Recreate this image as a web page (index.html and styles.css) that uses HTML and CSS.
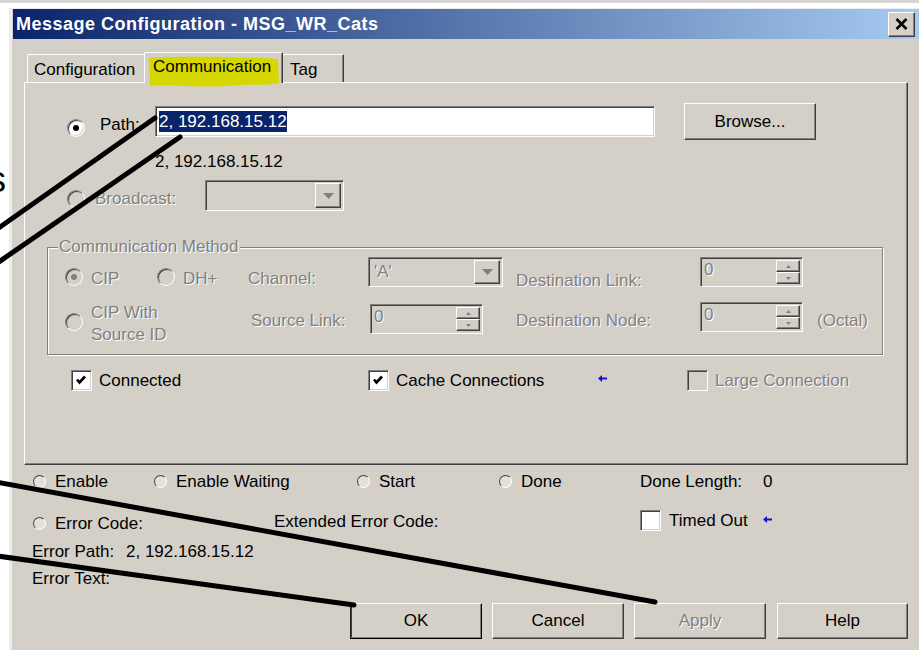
FILE: index.html
```html
<!DOCTYPE html>
<html lang="en">
<head>
<meta charset="utf-8">
<title>Message Configuration - MSG_WR_Cats</title>
<link rel="stylesheet" href="styles.css">
</head>
<body>
<div class="screen">
  <div class="desk-strip"></div>
  <span class="behind-letter">s</span>

  <div class="dialog">
    <div class="titlebar">
      <span class="title">Message Configuration - MSG_WR_Cats</span>
      <div class="close-btn">
        <svg width="13" height="12" viewBox="0 0 13 12"><path d="M1.5 1 L11.5 11 M11.5 1 L1.5 11" stroke="#000" stroke-width="2.6" fill="none"/></svg>
      </div>
    </div>

    <div class="tabs">
      <div class="tab tab-first">Configuration</div>
      <div class="tab tab-active">
        <svg class="marker" width="134" height="33" viewBox="0 0 134 33"><path d="M2 2.5 C 40 1, 95 1.5, 131 4 L132 28 C 118 31, 100 29, 78 31 C 55 33, 30 29, 3 30.5 Z" fill="#d7d700"/></svg>
        <span class="tab-text">Communication</span>
      </div>
      <div class="tab tab-last">Tag</div>
    </div>

    <div class="panel">
      <div class="row row-path">
        <span class="radio radio-on"></span>
        <span class="lbl-path">Path:</span>
        <div class="field path-field"><span class="sel">2, 192.168.15.12</span></div>
        <div class="btn btn-browse">Browse...</div>
      </div>

      <div class="row row-ip">2, 192.168.15.12</div>

      <div class="row row-bcast">
        <span class="radio radio-dis"></span>
        <span class="lbl-bcast dis">Broadcast:</span>
        <div class="field field-dis combo combo-bcast">
          <span class="combo-text"></span>
          <span class="combo-btn"><svg width="11" height="6" viewBox="0 0 11 6"><path d="M0 0 H11 L5.5 6 Z" fill="#808080"/></svg></span>
        </div>
      </div>

      <div class="group">
        <div class="group-title dis">Communication Method</div>
        <div class="grow grow-1">
          <span class="radio radio-dis radio-on g-radio"></span>
          <span class="g-cip dis">CIP</span>
          <span class="radio radio-dis g-radio g-radio-dh"></span>
          <span class="g-dh dis">DH+</span>
          <span class="g-channel dis">Channel:</span>
          <div class="field field-dis combo combo-channel">
            <span class="combo-text dis">'A'</span>
            <span class="combo-btn"><svg width="11" height="6" viewBox="0 0 11 6"><path d="M0 0 H11 L5.5 6 Z" fill="#808080"/></svg></span>
          </div>
          <span class="g-dlink dis">Destination Link:</span>
          <div class="field field-dis spin spin-dlink">
            <span class="spin-val dis">0</span>
            <span class="spin-btns">
              <span class="spin-b"><svg width="5" height="3" viewBox="0 0 5 3"><path d="M0 3 H5 L2.5 0 Z" fill="#808080"/></svg></span>
              <span class="spin-b"><svg width="5" height="3" viewBox="0 0 5 3"><path d="M0 0 H5 L2.5 3 Z" fill="#808080"/></svg></span>
            </span>
          </div>
        </div>
        <div class="grow grow-2">
          <span class="radio radio-dis g-radio-2"></span>
          <span class="g-cipsrc dis">CIP With<br>Source ID</span>
          <span class="g-slink dis">Source Link:</span>
          <div class="field field-dis spin spin-slink">
            <span class="spin-val dis">0</span>
            <span class="spin-btns">
              <span class="spin-b"><svg width="5" height="3" viewBox="0 0 5 3"><path d="M0 3 H5 L2.5 0 Z" fill="#808080"/></svg></span>
              <span class="spin-b"><svg width="5" height="3" viewBox="0 0 5 3"><path d="M0 0 H5 L2.5 3 Z" fill="#808080"/></svg></span>
            </span>
          </div>
          <span class="g-dnode dis">Destination Node:</span>
          <div class="field field-dis spin spin-dnode">
            <span class="spin-val dis">0</span>
            <span class="spin-btns">
              <span class="spin-b"><svg width="5" height="3" viewBox="0 0 5 3"><path d="M0 3 H5 L2.5 0 Z" fill="#808080"/></svg></span>
              <span class="spin-b"><svg width="5" height="3" viewBox="0 0 5 3"><path d="M0 0 H5 L2.5 3 Z" fill="#808080"/></svg></span>
            </span>
          </div>
          <span class="g-octal dis">(Octal)</span>
        </div>
      </div>

      <div class="row row-checks">
        <span class="check cb-connected"><svg width="19" height="19" viewBox="0 0 19 19"><path d="M5 8.5 L7.5 11.5 L13 5.5" stroke="#000" stroke-width="2.6" fill="none"/></svg></span>
        <span class="ck-label ck-connected">Connected</span>
        <span class="check"><svg width="19" height="19" viewBox="0 0 19 19"><path d="M5 8.5 L7.5 11.5 L13 5.5" stroke="#000" stroke-width="2.6" fill="none"/></svg></span>
        <span class="ck-label ck-cache">Cache Connections</span>
        <svg class="arrow arrow-cache" width="9" height="7" viewBox="0 0 9 7"><path d="M0 3.5 L4 0 V2.5 H9 V4.5 H4 V7 Z" fill="#1414c8"/></svg>
        <span class="check check-dis cb-large"></span>
        <span class="ck-label dis">Large Connection</span>
      </div>
    </div>

    <div class="status-row status-a">
      <span class="cell cell-enable"><span class="led"></span>Enable</span>
      <span class="cell cell-waiting"><span class="led"></span>Enable Waiting</span>
      <span class="cell cell-start"><span class="led"></span>Start</span>
      <span class="cell cell-done"><span class="led"></span>Done</span>
      <span class="cell cell-dlen">Done Length:</span>
      <span>0</span>
    </div>

    <div class="status-row status-b">
      <span class="cell cell-err"><span class="led"></span>Error Code:</span>
      <span class="cell cell-ext">Extended Error Code:</span>
      <span class="check check-timed"></span>
      <span class="cell cell-timed">Timed Out</span>
      <svg class="arrow arrow-timed" width="9" height="7" viewBox="0 0 9 7"><path d="M0 3.5 L4 0 V2.5 H9 V4.5 H4 V7 Z" fill="#1414c8"/></svg>
    </div>

    <div class="status-row status-c">
      <span class="cell cell-epath">Error Path:</span>
      <span>2, 192.168.15.12</span>
    </div>

    <div class="status-row status-d">
      <span class="cell">Error Text:</span>
    </div>

    <div class="buttons">
      <div class="btn btn-default">OK</div>
      <div class="btn">Cancel</div>
      <div class="btn dis">Apply</div>
      <div class="btn btn-help">Help</div>
    </div>
  </div>

  <svg class="ink" width="919" height="650" viewBox="0 0 919 650">
    <g stroke="#000" stroke-width="5" stroke-linecap="round" fill="none">
      <line x1="155" y1="118" x2="-10" y2="234"/>
      <line x1="180" y1="137" x2="-10" y2="268"/>
      <line x1="-10" y1="481" x2="655" y2="602"/>
      <line x1="-10" y1="555" x2="354" y2="605"/>
    </g>
  </svg>
</div>
</body>
</html>
```
FILE: styles.css
```css
html, body {
  margin: 0;
  padding: 0;
  background: #fff;
}

body {
  font-family: "Liberation Sans", Arial, sans-serif;
  font-size: 17px;
  line-height: 20px;
  color: #000;
}

.screen {
  position: relative;
  width: 919px;
  height: 650px;
  overflow: hidden;
}

.desk-strip {
  height: 3px;
  background: #d6d6d6;
  margin-bottom: 5px;
}

.behind-letter {
  position: absolute;
  left: -12px;
  top: 162px;
  font-size: 36px;
  line-height: 36px;
}

/* dialog frame */
.dialog {
  margin-left: 9px;
  border-left: 3px solid #ececec;
  border-top: 1px solid #ececec;
  padding-left: 1px;
  background: #d4d0c8;
  height: 642px;
}

.titlebar {
  display: flex;
  align-items: center;
  height: 30px;
  padding: 0 4px 0 3px;
  background: linear-gradient(to right, #0a246a, #a6caf0);
}

.title {
  color: #fff;
  font-weight: bold;
  font-size: 18px;
  letter-spacing: 0.5px;
}

.close-btn {
  margin-left: auto;
  width: 27px;
  height: 25px;
  box-sizing: border-box;
  display: flex;
  align-items: center;
  justify-content: center;
  background: #d4d0c8;
  border: 1px solid;
  border-color: #fff #404040 #404040 #fff;
  box-shadow: inset -1px -1px #808080;
}

/* tabs */
.tabs {
  display: flex;
  align-items: flex-end;
  height: 30px;
  margin-top: 13px;
  padding-left: 14px;
}

.tab {
  box-sizing: border-box;
  height: 28px;
  border-top: 1px solid #fff;
  padding-top: 5px;
  white-space: nowrap;
}

.tab-first {
  width: 117px;
  border-left: 1px solid #fff;
  padding-left: 6px;
  border-top-left-radius: 2px;
}

.tab-active {
  position: relative;
  z-index: 1;
  width: 139px;
  height: 31px;
  margin-bottom: -1px;
  padding-top: 4px;
  padding-left: 8px;
  background: #d4d0c8;
  border-left: 1px solid #fff;
  border-right: 1px solid #404040;
  box-shadow: inset -1px 0 #808080;
  border-top-left-radius: 2px;
}

.tab-active .marker {
  position: absolute;
  left: 2px;
  top: 2px;
}

.tab-text {
  position: relative;
}

.tab-last {
  width: 61px;
  padding-left: 7px;
  border-right: 1px solid #404040;
  box-shadow: inset -1px 0 #808080;
}

/* tab page */
.panel {
  margin-left: 11px;
  width: 884px;
  height: 383px;
  box-sizing: border-box;
  border-top: 1px solid #fff;
  border-left: 1px solid #fff;
  border-right: 1px solid #404040;
  border-bottom: 1px solid #404040;
  box-shadow: inset -1px -1px #808080;
  padding-top: 20px;
}

.row {
  display: flex;
  align-items: flex-start;
  white-space: nowrap;
}

.dis {
  color: #808080;
  text-shadow: 1px 1px 0 #fff;
}

/* 3D controls */
.radio {
  flex: none;
  position: relative;
  width: 18px;
  height: 18px;
  box-sizing: border-box;
  border-radius: 50%;
  border: 1px solid;
  border-color: #808080 #fff #fff #808080;
  box-shadow: inset 1px 1px #404040, inset -1px -1px #d4d0c8;
  background: #fff;
}

.radio-on::after {
  content: "";
  position: absolute;
  left: 5px;
  top: 5px;
  width: 6px;
  height: 6px;
  border-radius: 50%;
  background: #000;
}

.radio-dis {
  background: #d4d0c8;
}

.radio-dis.radio-on::after {
  background: #808080;
}

.field {
  flex: none;
  box-sizing: border-box;
  border: 1px solid;
  border-color: #808080 #fff #fff #808080;
  box-shadow: inset 1px 1px #404040, inset -1px -1px #d4d0c8;
  background: #fff;
}

.field-dis {
  background: #d4d0c8;
}

.check {
  flex: none;
  display: flex;
  width: 21px;
  height: 21px;
  box-sizing: border-box;
  border: 1px solid;
  border-color: #808080 #fff #fff #808080;
  box-shadow: inset 1px 1px #404040, inset -1px -1px #d4d0c8;
  background: #fff;
}

.check-dis {
  background: #d4d0c8;
}

.btn {
  flex: none;
  box-sizing: border-box;
  display: flex;
  align-items: center;
  justify-content: center;
  background: #d4d0c8;
  border: 1px solid;
  border-color: #fff #404040 #404040 #fff;
  box-shadow: inset -1px -1px #808080;
}

/* path row */
.row-path {
  height: 37px;
}

.row-path .radio {
  margin: 16px 0 0 42px;
}

.lbl-path {
  width: 55px;
  margin: 12px 0 0 15px;
}

.path-field {
  width: 500px;
  height: 31px;
  margin-top: 3px;
  padding: 4px 0 0 3px;
}

.sel {
  display: inline-block;
  height: 21px;
  line-height: 21px;
  background: #0a246a;
  color: #fff;
}

.btn-browse {
  width: 132px;
  height: 37px;
  margin-left: 29px;
}

.row-ip {
  height: 20px;
  margin-top: 12px;
  padding-left: 130px;
}

/* broadcast row */
.row-bcast {
  height: 31px;
  margin-top: 8px;
}

.row-bcast .radio {
  margin: 10px 0 0 42px;
}

.lbl-bcast {
  width: 110px;
  margin: 9px 0 0 10px;
}

.combo {
  display: flex;
  justify-content: space-between;
  padding: 2px;
}

.combo-bcast {
  width: 139px;
  height: 31px;
}

.combo-text {
  padding: 2px 0 0 3px;
}

.combo-btn {
  width: 26px;
  box-sizing: border-box;
  display: flex;
  align-items: center;
  justify-content: center;
  border: 1px solid;
  border-color: #fff #404040 #404040 #fff;
  box-shadow: inset -1px -1px #808080;
  background: #d4d0c8;
}

/* communication method group */
.group {
  box-sizing: border-box;
  width: 836px;
  height: 108px;
  margin: 36px 0 0 22px;
  border: 1px solid #808080;
  box-shadow: inset 1px 1px #fff, 1px 1px #fff;
}

.group-title {
  display: table;
  margin: -11px 0 0 10px;
  padding: 0 1px;
  background: #d4d0c8;
}

.grow {
  display: flex;
  align-items: flex-start;
  white-space: nowrap;
}

.grow-1 {
  height: 30px;
}

.g-radio {
  margin: 11px 0 0 17px;
}

.g-radio-dh {
  margin-left: 0;
}

.g-cip {
  width: 66px;
  margin: 12px 0 0 8px;
}

.g-dh {
  width: 65px;
  margin: 12px 0 0 8px;
}

.g-channel {
  width: 120px;
  margin-top: 12px;
}

.combo-channel {
  width: 135px;
  height: 30px;
}

.combo-channel .combo-text {
  padding-top: 2px;
}

.g-dlink {
  width: 184px;
  margin: 14px 0 0 13px;
}

.spin {
  display: flex;
  padding: 2px;
}

.spin-val {
  flex: 1;
  padding: 0 0 0 1px;
}

.spin-btns {
  width: 24px;
  display: flex;
  flex-direction: column;
}

.spin-b {
  flex: 1;
  display: flex;
  align-items: center;
  justify-content: center;
  box-sizing: border-box;
  border: 1px solid;
  border-color: #fff #404040 #404040 #fff;
  box-shadow: inset -1px -1px #808080;
  background: #d4d0c8;
}

.spin-dlink,
.spin-dnode {
  width: 103px;
  height: 30px;
}

.spin-slink {
  width: 113px;
  height: 30px;
  margin-top: 17px;
}

.spin-dnode {
  margin-top: 15px;
}

.g-radio-2 {
  margin: 26px 0 0 17px;
}

.g-cipsrc {
  width: 160px;
  margin: 15px 0 0 8px;
  line-height: 22px;
}

.g-slink {
  width: 119px;
  margin-top: 24px;
}

.g-dnode {
  width: 184px;
  margin: 24px 0 0 33px;
}

.g-octal {
  margin: 24px 0 0 14px;
}

/* check boxes */
.row-checks {
  height: 21px;
  margin-top: 15px;
  line-height: 21px;
}

.cb-connected {
  margin-left: 46px;
}

.ck-label {
  margin-left: 7px;
}

.ck-connected {
  width: 269px;
}

.ck-cache {
  width: 202px;
}

.arrow {
  flex: none;
  display: block;
}

.arrow-cache {
  margin-top: 5px;
}

.cb-large {
  margin-left: 80px;
}

/* status area */
.status-row {
  display: flex;
  align-items: flex-start;
  white-space: nowrap;
}

.cell {
  display: flex;
  align-items: flex-start;
  flex: none;
}

.led {
  flex: none;
  width: 13px;
  height: 13px;
  box-sizing: border-box;
  margin: 3px 9px 0 0;
  border-radius: 50%;
  border: 1px solid;
  border-color: #404040 #fff #fff #404040;
  background: #e4e1dc;
}

.status-a {
  height: 20px;
  margin-top: 7px;
}

.cell-enable {
  width: 121px;
  margin-left: 20px;
}

.cell-waiting {
  width: 203px;
}

.cell-start {
  width: 142px;
}

.cell-done {
  width: 141px;
}

.cell-dlen {
  width: 123px;
}

.status-b {
  height: 21px;
  margin-top: 18px;
}

.cell-err {
  width: 241px;
  margin: 4px 0 0 20px;
}

.cell-ext {
  width: 366px;
  margin-top: 2px;
}

.cell-timed {
  width: 94px;
  margin: 1px 0 0 8px;
}

.arrow-timed {
  margin-top: 6px;
}

.status-c {
  margin-top: 11px;
  padding-left: 19px;
}

.cell-epath {
  width: 94px;
}

.status-d {
  margin-top: 7px;
  padding-left: 19px;
}

/* dialog buttons */
.buttons {
  display: flex;
  gap: 10px;
  margin: 14px 0 0 337px;
}

.buttons .btn {
  width: 132px;
  height: 36px;
}

.buttons .btn-help {
  width: 131px;
  margin-left: 1px;
}

.btn-default {
  border-color: #fff #000 #000 #202020;
  box-shadow: inset -1px -1px #808080, inset 1px 0 #404040;
}

/* annotation strokes drawn over the dialog */
.ink {
  position: absolute;
  left: 0;
  top: 0;
  pointer-events: none;
}
```
